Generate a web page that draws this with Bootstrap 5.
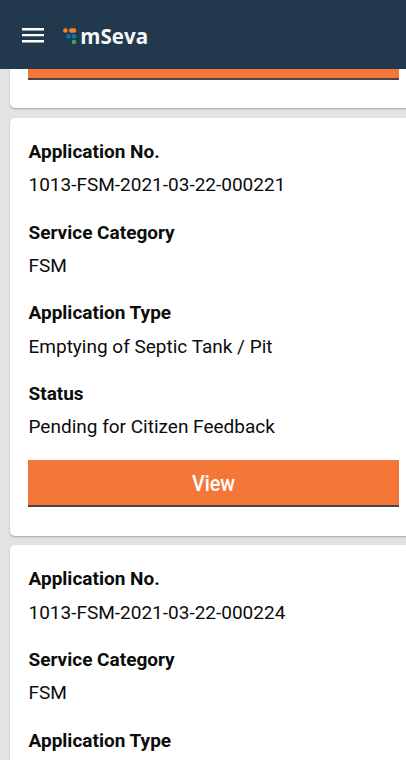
<!DOCTYPE html>
<html lang="en">
<head>
<meta charset="utf-8">
<meta name="viewport" content="width=device-width, initial-scale=1">
<title>mSeva</title>
<link href="https://cdn.jsdelivr.net/npm/bootstrap@5.3.0/dist/css/bootstrap.min.css" rel="stylesheet">
<style>
body{background:#e3e3e3;font-family:Roboto,"Liberation Sans",sans-serif;font-size:19px;line-height:28.5px;color:#0b0c0c}
.topbar{height:69px;background:#22394d;padding:1px 22px 0}
.menu-btn{width:22px;height:16px}
.brand{margin-left:19px}
.brand svg{display:block}
.list-area{padding-left:9.5px}
.app-card{width:409px;border-radius:5px;padding:19.8px 19px 28.5px;margin-bottom:9.5px;box-shadow:0 1px 2px rgba(0,0,0,.28)}
.app-card.clipped{border-radius:0 0 5px 5px;padding-top:0;margin-bottom:9.8px}
.field{margin:0 0 19px}
.field dt{font-weight:700;margin-bottom:4.75px}
.field dd{font-weight:400;margin:0}
.view-btn{width:370.7px;height:47.5px;margin:-.8px 0 0 -.2px;background:#f47738;border-bottom:2px solid #4b4447;font-size:22.5px;font-weight:500;line-height:46px}
.view-btn span{transform:scaleX(.88)}
.clipped .view-btn{height:10.7px;margin-top:0}
</style>
<script src="https://cdn.jsdelivr.net/npm/bootstrap@5.3.0/dist/js/bootstrap.bundle.min.js"></script>
</head>
<body class="vh-100 overflow-hidden d-flex flex-column">
<header class="topbar d-flex align-items-center flex-shrink-0">
  <button class="menu-btn btn p-0 border-0 d-flex" aria-label="Menu">
    <svg width="22" height="16" viewBox="0 0 22 16" fill="#fff"><path d="M0 1h22v2.4H0zM0 7h22v2.3H0zM0 13h22v2.4H0z"/></svg>
  </button>
  <a class="brand d-flex align-items-center text-decoration-none" href="#" aria-label="mSeva">
    <svg width="96" height="36" viewBox="0 -8 96 36">
      <g fill="#f58220"><circle cx="2.4" cy="5.5" r="2.3"/><rect x="6" y="3.2" width="7.2" height="4.6" rx="2"/></g>
      <g fill="#0873bd"><circle cx="5.4" cy="11.3" r="2.3"/><circle cx="11" cy="11.3" r="2.3"/></g>
      <circle cx="11" cy="17" r="2.3" fill="#31ad4b"/>
      <text x="17.3" y="19.4" fill="#f4f7fa" font-family="Open Sans, Noto Sans, sans-serif" font-weight="700" font-size="20.5" textLength="67.8" lengthAdjust="spacingAndGlyphs">mSeva</text>
    </svg>
  </a>
</header>
<main class="list-area flex-grow-1 overflow-hidden">
  <article class="app-card clipped bg-white">
    <div class="view-btn"></div>
  </article>
  <article class="app-card bg-white">
    <dl class="field"><dt>Application No.</dt><dd>1013-FSM-2021-03-22-000221</dd></dl>
    <dl class="field"><dt>Service Category</dt><dd>FSM</dd></dl>
    <dl class="field"><dt>Application Type</dt><dd>Emptying of Septic Tank / Pit</dd></dl>
    <dl class="field"><dt>Status</dt><dd>Pending for Citizen Feedback</dd></dl>
    <button class="view-btn btn rounded-0 p-0 border-top-0 border-start-0 border-end-0 text-white d-block"><span class="d-inline-block">View</span></button>
  </article>
  <article class="app-card bg-white">
    <dl class="field"><dt>Application No.</dt><dd>1013-FSM-2021-03-22-000224</dd></dl>
    <dl class="field"><dt>Service Category</dt><dd>FSM</dd></dl>
    <dl class="field"><dt>Application Type</dt></dl>
  </article>
</main>
</body>
</html>
